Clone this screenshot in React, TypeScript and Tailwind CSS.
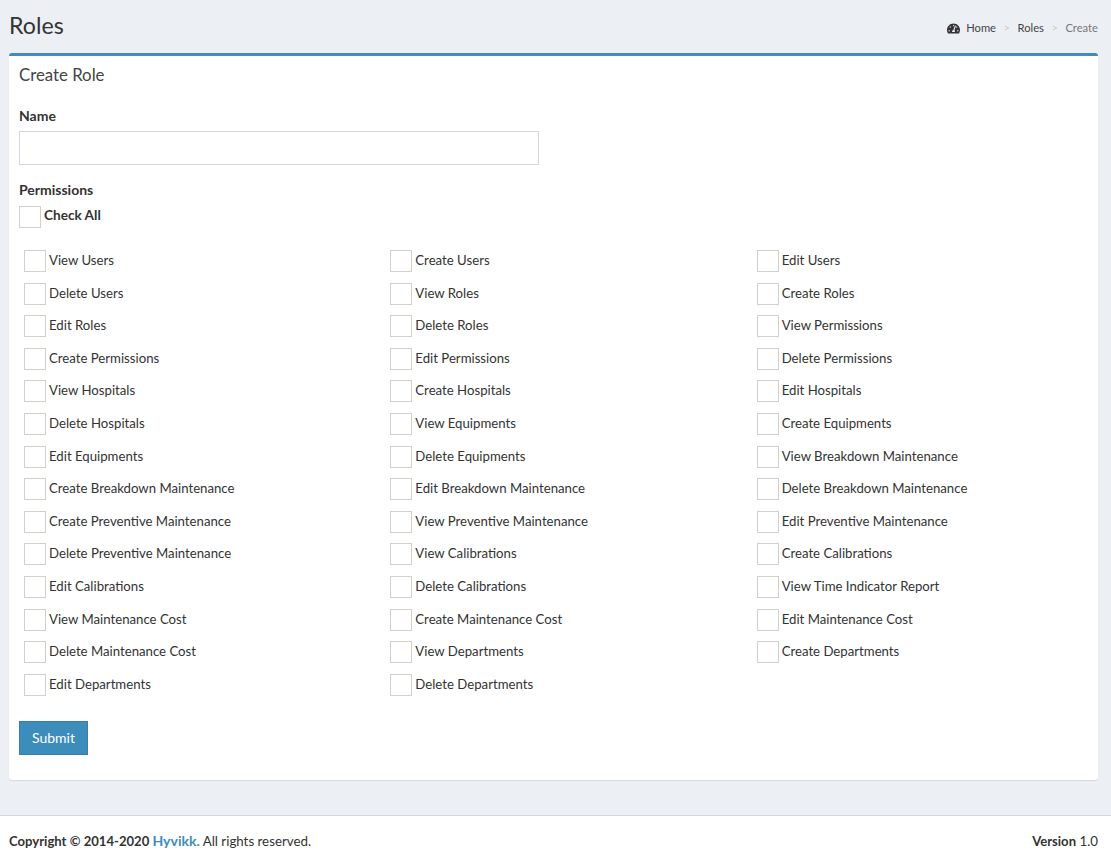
import { FaTachometerAlt } from "react-icons/fa";

const perms = ["View Users","Create Users","Edit Users","Delete Users","View Roles","Create Roles","Edit Roles","Delete Roles","View Permissions","Create Permissions","Edit Permissions","Delete Permissions","View Hospitals","Create Hospitals","Edit Hospitals","Delete Hospitals","View Equipments","Create Equipments","Edit Equipments","Delete Equipments","View Breakdown Maintenance","Create Breakdown Maintenance","Edit Breakdown Maintenance","Delete Breakdown Maintenance","Create Preventive Maintenance","View Preventive Maintenance","Edit Preventive Maintenance","Delete Preventive Maintenance","View Calibrations","Create Calibrations","Edit Calibrations","Delete Calibrations","View Time Indicator Report","View Maintenance Cost","Create Maintenance Cost","Edit Maintenance Cost","Delete Maintenance Cost","View Departments","Create Departments","Edit Departments","Delete Departments"];

function Box() {
  return <span className="block w-[22px] h-[22px] shrink-0 border border-[#d3d0ca] bg-white" />;
}

export default function App() {
  return (
    <div className="min-h-[864px] bg-[#ecf0f5] text-[#333] text-[13.2px] leading-[20px] font-['Lato','Noto_Sans',sans-serif]">
      <div className="flex items-start justify-between h-[53px] pl-[9px] pr-[13px] pt-[10px]">
        <h1 className="text-[23.2px] leading-[30px] text-[#333]">Roles</h1>
        <div className="flex items-center text-[11.2px] leading-[16px] mt-[10px]">
          <FaTachometerAlt className="w-[13px] h-[13px] text-[#333] mr-[6px]" />
          <span className="text-[#444]">Home</span>
          <span className="text-[#ccc] px-[7.5px]">&gt;</span>
          <span className="text-[#444]">Roles</span>
          <span className="text-[#ccc] px-[7.5px]">&gt;</span>
          <span className="text-[#777]">Create</span>
        </div>
      </div>

      <div className="ml-[9px] mr-[13px] h-[727px] bg-white border-t-[3px] border-[#3c8dbc] rounded-[3px] shadow-[0_1px_1px_rgba(0,0,0,0.1)]">
        <div className="px-[10px] pt-[9px]">
          <h3 className="text-[16.8px] leading-[20px] text-[#444]">Create Role</h3>
        </div>
        <form className="px-[10px] pt-[21px]">
          <label className="block text-[14px] font-bold leading-[20px]">Name</label>
          <input className="block mt-[5px] w-[520px] h-[34px] border border-[#d2d6de] bg-white" />
          <div className="mt-[15px] text-[14px] font-bold leading-[20px]">Permissions</div>
          <div className="flex items-start gap-[3px] mt-[6px]">
            <Box />
            <span className="text-[13.6px] font-bold leading-[20px] -mt-[1px]">Check All</span>
          </div>
          <div className="grid grid-cols-3 -mx-[15px] auto-rows-[32.6px] mt-[22px] w-[1099px]">
            {perms.map((p) => (
              <div key={p} className="flex items-start gap-[3px] pl-[20px]">
                <Box />
                <span className="leading-[20px]">{p}</span>
              </div>
            ))}
          </div>
          <button type="button" className="block mt-[15px] w-[69px] h-[34px] bg-[#3c8dbc] border border-[#367fa9] text-[14px] text-white leading-[20px]">Submit</button>
        </form>
      </div>

      <footer className="mt-[35px] h-[49px] bg-white border-t border-[#d2d6de] flex items-center justify-between pl-[9px] pr-[13px] pt-[2px] text-[13.3px]">
        <div><b className="text-[13.1px]">Copyright © 2014-2020 <span className="text-[14px] text-[#3c8dbc]">Hyvikk.</span></b> All rights reserved.</div>
        <div><b className="text-[13.1px]">Version</b> 1.0</div>
      </footer>
    </div>
  );
}
